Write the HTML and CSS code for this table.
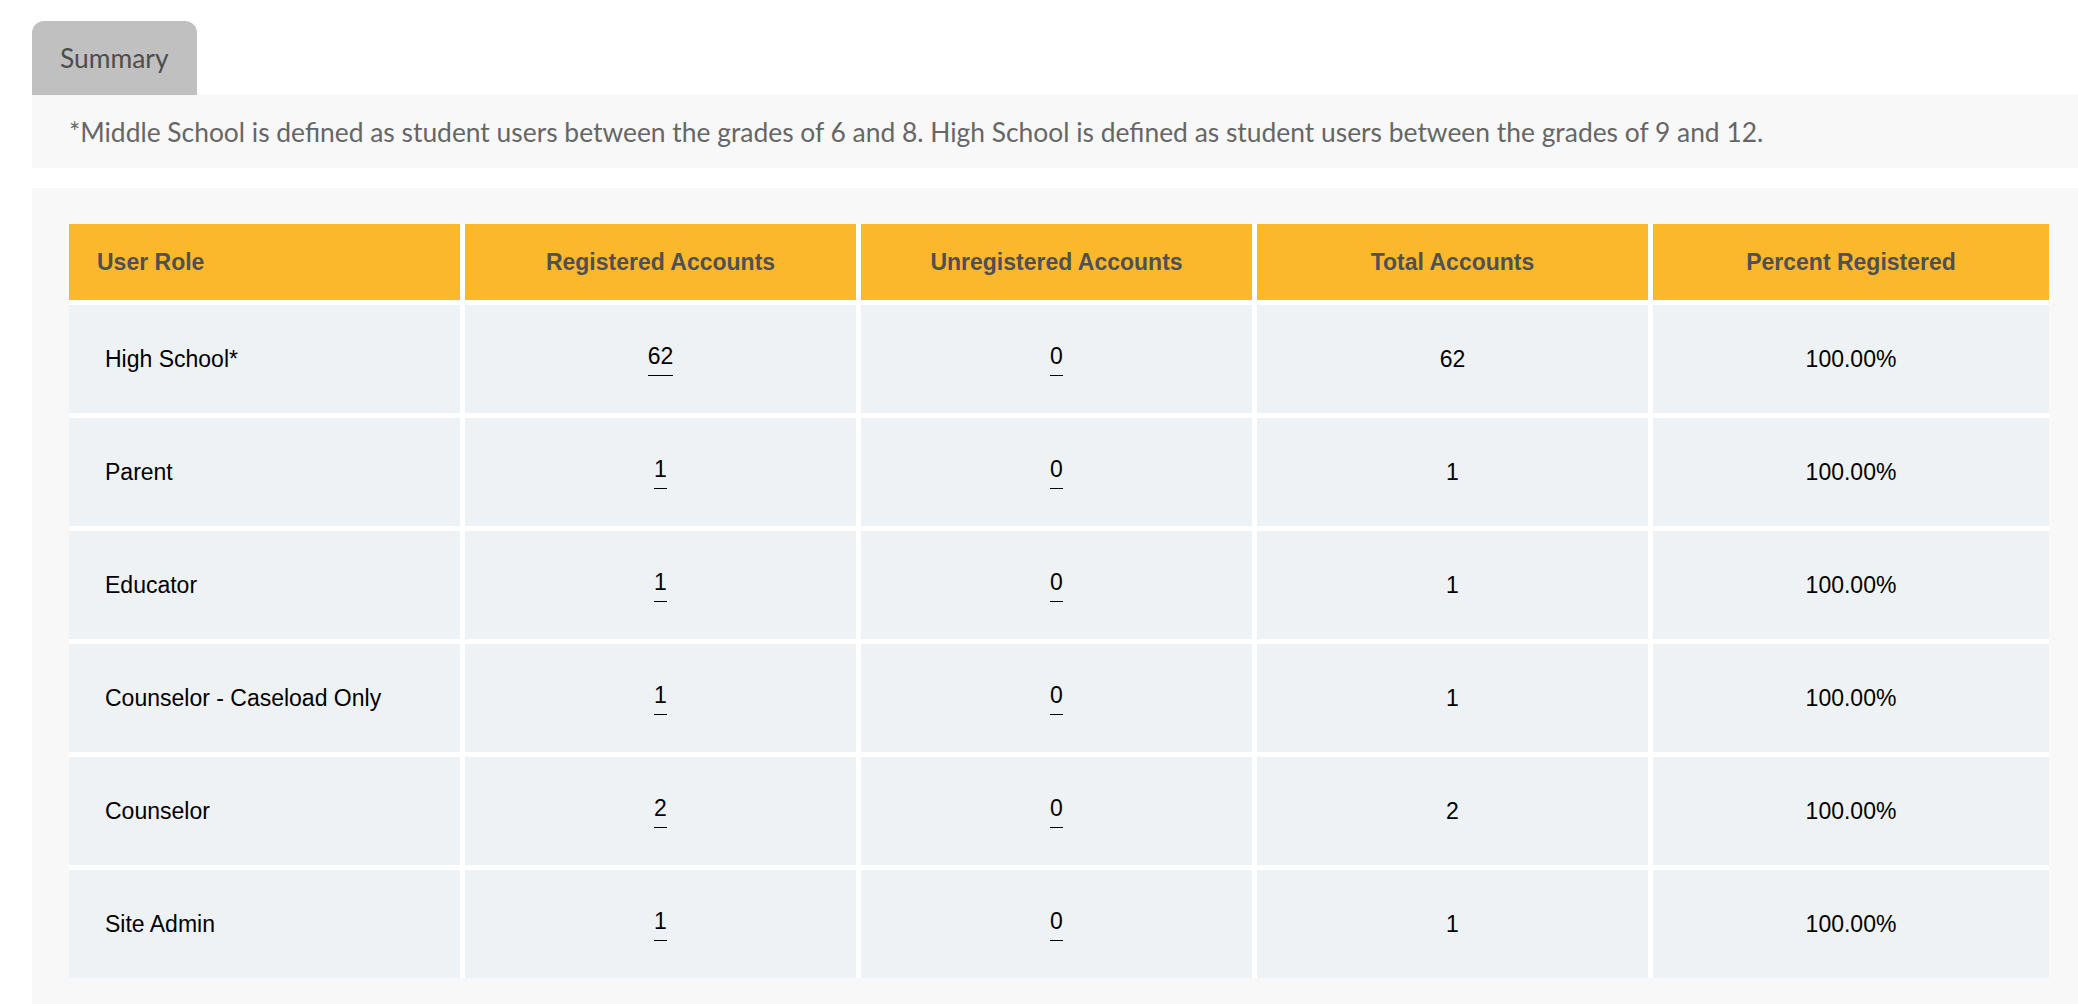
FILE: index.html
```html
<!DOCTYPE html>
<html lang="en">
<head>
<meta charset="utf-8">
<title>Summary</title>
<link rel="stylesheet" href="styles.css">
</head>
<body>
<div class="page">
  <div class="tabs">
    <div class="tab">Summary</div>
  </div>
  <div class="note">*Middle School is defined as student users between the grades of 6 and 8. High School is defined as student users between the grades of 9 and 12.</div>
  <div class="panel">
    <table class="report">
      <thead>
        <tr>
          <th class="role">User Role</th>
          <th>Registered Accounts</th>
          <th>Unregistered Accounts</th>
          <th>Total Accounts</th>
          <th>Percent Registered</th>
        </tr>
      </thead>
      <tbody>
        <tr>
          <td class="role">High School*</td>
          <td><a class="count" href="#">62</a></td>
          <td><a class="count" href="#">0</a></td>
          <td>62</td>
          <td>100.00%</td>
        </tr>
        <tr>
          <td class="role">Parent</td>
          <td><a class="count" href="#">1</a></td>
          <td><a class="count" href="#">0</a></td>
          <td>1</td>
          <td>100.00%</td>
        </tr>
        <tr>
          <td class="role">Educator</td>
          <td><a class="count" href="#">1</a></td>
          <td><a class="count" href="#">0</a></td>
          <td>1</td>
          <td>100.00%</td>
        </tr>
        <tr>
          <td class="role">Counselor - Caseload Only</td>
          <td><a class="count" href="#">1</a></td>
          <td><a class="count" href="#">0</a></td>
          <td>1</td>
          <td>100.00%</td>
        </tr>
        <tr>
          <td class="role">Counselor</td>
          <td><a class="count" href="#">2</a></td>
          <td><a class="count" href="#">0</a></td>
          <td>2</td>
          <td>100.00%</td>
        </tr>
        <tr>
          <td class="role">Site Admin</td>
          <td><a class="count" href="#">1</a></td>
          <td><a class="count" href="#">0</a></td>
          <td>1</td>
          <td>100.00%</td>
        </tr>
      </tbody>
    </table>
  </div>
</div>
</body>
</html>
```

FILE: styles.css
```css
html, body {
  margin: 0;
  padding: 0;
  background: #ffffff;
}

.page {
  padding: 21px 0 0 32px;
}

.tabs {
  display: flex;
}

.tab {
  height: 74px;
  padding: 0 28px;
  display: flex;
  align-items: center;
  background: #c0c0c0;
  border-radius: 12px 12px 0 0;
  font-family: Lato, "Open Sans", sans-serif;
  font-size: 26.4px;
  color: #4d4d4d;
}

.note {
  height: 73px;
  padding-left: 37px;
  display: flex;
  align-items: center;
  background: #f8f8f8;
  font-family: Lato, "Open Sans", sans-serif;
  font-size: 26.4px;
  color: #666666;
}

.panel {
  margin-top: 20px;
  background: #f8f8f8;
  padding: 36px 29px 36px 37px;
}

.report {
  width: 100%;
  table-layout: fixed;
  border-collapse: separate;
  border-spacing: 0;
  font-family: "Liberation Sans", Arial, sans-serif;
  font-size: 23px;
}

.report th,
.report td {
  padding: 0;
  text-align: center;
  vertical-align: middle;
  border-right: 5px solid #ffffff;
  border-bottom: 5px solid #ffffff;
}

.report th:last-child,
.report td:last-child {
  border-right: 0;
}

.report tbody tr:last-child td {
  border-bottom: 0;
}

.report th {
  height: 76px;
  background: #fbb82c;
  color: #505050;
  font-weight: bold;
}

.report td {
  height: 108px;
  background: #eef2f5;
  color: #000000;
}

.report th.role {
  text-align: left;
  padding-left: 28px;
}

.report td.role {
  text-align: left;
  padding-left: 36px;
}

.count {
  display: inline-block;
  color: #000000;
  text-decoration: none;
  border-bottom: 1px solid #000000;
  padding-bottom: 5px;
}
```
